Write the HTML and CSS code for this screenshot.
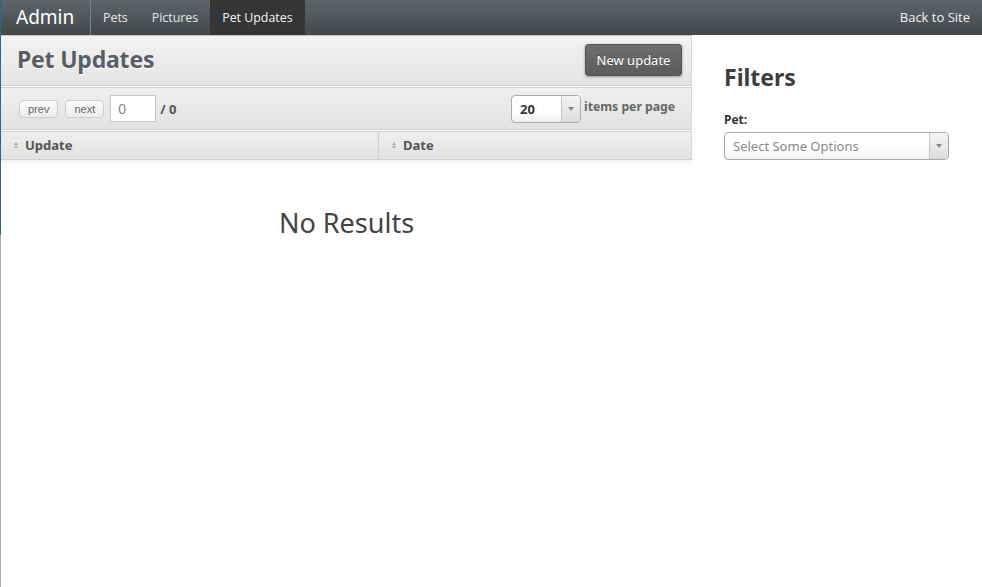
FILE: index.html
```html
<!DOCTYPE html>
<html>
<head>
<meta charset="utf-8">
<link rel="stylesheet" href="styles.css">
</head>
<body>
<nav class="topbar">
  <a class="brand">Admin</a>
  <ul class="nav">
    <li><a>Pets</a></li>
    <li><a>Pictures</a></li>
    <li class="active"><a>Pet Updates</a></li>
  </ul>
  <a class="back">Back to Site</a>
</nav>
<div class="page">
  <main class="main">
    <div class="head">
      <h1>Pet Updates</h1>
      <button class="btn-new">New update</button>
    </div>
    <div class="pager">
      <div class="pager-left">
        <button class="small">prev</button>
        <button class="small">next</button>
        <input class="pageinput" value="0">
        <span class="total">/ 0</span>
      </div>
      <div class="pager-right">
        <div class="select per">
          <span class="val">20</span>
          <span class="arrow"><i></i></span>
        </div>
        <span class="ipp">items per page</span>
      </div>
    </div>
    <div class="thead">
      <div class="th th1"><span class="sort"><b></b><b class="dn"></b></span>Update</div>
      <div class="th th2"><span class="sort"><b></b><b class="dn"></b></span>Date</div>
    </div>
    <div class="empty">No Results</div>
  </main>
  <aside class="side">
    <h2>Filters</h2>
    <label class="lbl">Pet:</label>
    <div class="select multi">
      <span class="ph">Select Some Options</span>
      <span class="arrow"><i></i></span>
    </div>
  </aside>
</div>
</body>
</html>
```
FILE: styles.css
```css
* { box-sizing: border-box; }
html, body { margin: 0; padding: 0; }
body {
  font-family: "Open Sans", "Noto Sans", sans-serif;
  background: #fff linear-gradient(to bottom, #2b6a85 235px, #b0b0b0 235px) no-repeat 0 0 / 1px 100%;
  color: #444;
  width: 982px;
  height: 587px;
  overflow: hidden;
  padding-left: 1px;
}
.topbar {
  height: 35px;
  display: flex;
  align-items: stretch;
  background: linear-gradient(#606468, #44484b);
  color: #fff;
}
.brand {
  font-family: "Noto Sans", "Open Sans", sans-serif;
  font-size: 19px;
  line-height: 35px;
  padding: 0 16px 0 15px;
  border-right: 1px solid #7d8184;
  width: 90px;
  color: #fff;
}
.nav {
  list-style: none;
  margin: 0;
  padding: 0;
  display: flex;
}
.nav li a {
  display: block;
  font-size: 12.4px;
  line-height: 35px;
  padding: 0 12px;
  color: #e8e8e8;
}
.nav li.active a {
  background: #343638;
  color: #f4f4f4;
}
.back {
  margin-left: auto;
  font-size: 13px;
  line-height: 35px;
  padding-right: 12px;
  color: #f2f2f2;
}
.page {
  display: flex;
  align-items: flex-start;
}
.main {
  width: 691px;
  flex: none;
}
.head {
  height: 51px;
  display: flex;
  align-items: center;
  justify-content: space-between;
  padding: 0 9px 0 16px;
  background: linear-gradient(#f2f2f2, #e4e4e4);
  border-top: 1px solid #c8c8c8;
  border-right: 1px solid #d8d8d8;
  border-bottom: 1px solid #cfcfcf;
}
.head h1 {
  margin: 0 0 3px;
  font-family: "Noto Sans", sans-serif;
  font-size: 23px;
  font-weight: bold;
  color: #5a5e63;
  text-shadow: 0 1px 0 #fff;
  letter-spacing: -0.2px;
}
.btn-new {
  font-family: "Noto Sans", sans-serif;
  width: 97px;
  height: 32px;
  margin-top: -2px;
  border: 1px solid #555;
  border-radius: 3px;
  background: linear-gradient(#6f6f6f, #5c5c5c);
  color: #fff;
  font-size: 13px;
  box-shadow: 0 1px 3px rgba(0,0,0,0.35);
  text-shadow: 0 -1px 0 rgba(0,0,0,0.3);
  padding: 0;
}
.pager {
  margin-top: 1px;
  height: 43px;
  display: flex;
  align-items: center;
  justify-content: space-between;
  padding: 0 16px 0 18px;
  background: linear-gradient(#efefef, #e2e2e2);
  border-top: 1px solid #cfcfcf;
  border-right: 1px solid #d8d8d8;
  border-bottom: 1px solid #cfcfcf;
}
.pager-left, .pager-right { display: flex; align-items: center; }
.small {
  font-family: "Liberation Sans", sans-serif;
  font-size: 11px;
  color: #666;
  height: 18px;
  padding: 0 8px;
  margin-right: 7px;
  border: 1px solid #ccc;
  border-radius: 4px;
  background: linear-gradient(#fbfbfb, #ececec);
}
.small + .small { margin-right: 6px; }
.pageinput {
  width: 46px;
  height: 27px;
  border: 1px solid #c8c8c8;
  background: #fff;
  font-family: "Liberation Sans", sans-serif;
  font-size: 14px;
  color: #888;
  padding: 0 7px;
  margin: 0;
}
.total {
  font-family: "Noto Sans", sans-serif;
  font-weight: bold;
  font-size: 13px;
  color: #555;
  margin-left: 4px;
}
.select {
  display: flex;
  align-items: stretch;
  border: 1px solid #aaa;
  border-radius: 4px;
  background: linear-gradient(#fff 60%, #eee);
  overflow: hidden;
}
.select .arrow {
  width: 19px;
  border-left: 1px solid #c4c4c4;
  background: linear-gradient(#f4f4f4, #dcdcdc);
  display: flex;
  align-items: center;
  justify-content: center;
}
.select .arrow i {
  width: 0; height: 0;
  border-left: 3px solid transparent;
  border-right: 3px solid transparent;
  border-top: 4px solid #888;
}
.per {
  width: 70px;
  height: 28px;
}
.per .val {
  flex: 1;
  font-family: "Noto Sans", sans-serif;
  font-weight: bold;
  font-size: 13px;
  color: #333;
  line-height: 26px;
  padding-left: 8px;
}
.ipp {
  font-family: "Noto Sans", sans-serif;
  font-weight: bold;
  font-size: 12.2px;
  color: #666;
  margin-left: 3px;
  margin-top: -5px;
}
.thead {
  margin-top: 1px;
  height: 29px;
  display: flex;
  background: linear-gradient(#eeeeee, #e2e2e2);
  border-top: 1px solid #d2d2d2;
  border-right: 1px solid #d8d8d8;
  border-bottom: 1px solid #cfcfcf;
  box-shadow: 0 2px 3px rgba(0,0,0,0.06);
}
.th {
  display: flex;
  align-items: center;
  padding-bottom: 1px;
  font-family: "Noto Sans", sans-serif;
  font-weight: bold;
  font-size: 13px;
  color: #555;
}
.th1 { width: 378px; padding-left: 13px; border-right: 1px solid #d0d0d0; }
.th2 { flex: 1; padding-left: 13px; }
.sort {
  display: inline-flex;
  flex-direction: column;
  gap: 1px;
  margin-right: 7px;
}
.sort b {
  width: 0; height: 0;
  border-left: 2.5px solid transparent;
  border-right: 2.5px solid transparent;
  border-bottom: 3px solid #aaa;
}
.sort b.dn { border-bottom: 0; border-top: 3px solid #aaa; }
.empty {
  text-align: center;
  font-family: "Noto Sans", sans-serif;
  font-size: 27px;
  color: #444;
  margin-top: 44px;
}
.side {
  padding-left: 32px;
  padding-top: 25px;
  flex: 1;
}
.side h2 {
  margin: 0;
  font-family: "Noto Sans", sans-serif;
  font-size: 23px;
  font-weight: bold;
  color: #3d3d3d;
  line-height: 34px;
}
.lbl {
  display: block;
  margin-top: 17px;
  font-family: "Noto Sans", sans-serif;
  font-weight: bold;
  font-size: 12px;
  color: #333;
}
.multi {
  margin-top: 4px;
  width: 225px;
  height: 28px;
}
.multi .ph {
  flex: 1;
  font-family: "Noto Sans", sans-serif;
  font-size: 13px;
  color: #888;
  line-height: 26px;
  padding-left: 8px;
}
```
